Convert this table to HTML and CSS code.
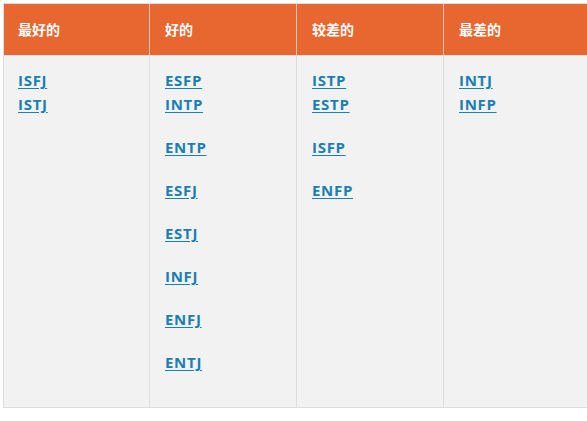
FILE: index.html
```html
<!DOCTYPE html>
<html lang="zh">
<head>
<meta charset="utf-8">
<link rel="stylesheet" href="styles.css">
</head>
<body>
<table class="types">
  <colgroup>
    <col class="c1">
    <col class="c">
    <col class="c">
    <col class="c">
  </colgroup>
  <thead>
    <tr>
      <th>最好的</th>
      <th>好的</th>
      <th>较差的</th>
      <th>最差的</th>
    </tr>
  </thead>
  <tbody>
    <tr>
      <td>
        <p><a href="#">ISFJ</a><br><a href="#">ISTJ</a></p>
      </td>
      <td>
        <p><a href="#">ESFP</a><br><a href="#">INTP</a></p>
        <p><a href="#">ENTP</a></p>
        <p><a href="#">ESFJ</a></p>
        <p><a href="#">ESTJ</a></p>
        <p><a href="#">INFJ</a></p>
        <p><a href="#">ENFJ</a></p>
        <p><a href="#">ENTJ</a></p>
      </td>
      <td>
        <p><a href="#">ISTP</a><br><a href="#">ESTP</a></p>
        <p><a href="#">ISFP</a></p>
        <p><a href="#">ENFP</a></p>
      </td>
      <td>
        <p><a href="#">INTJ</a><br><a href="#">INFP</a></p>
      </td>
    </tr>
  </tbody>
</table>
</body>
</html>
```

FILE: styles.css
```css
html, body {
  margin: 0;
  padding: 0;
  background: #ffffff;
  overflow: hidden;
}
body {
  padding: 3px 0 0 3px;
  font-family: "Open Sans", "Noto Sans CJK SC", sans-serif;
  font-size: 14px;
}
.types {
  border-collapse: collapse;
  table-layout: fixed;
  width: 588px;
  border: 1px solid #dddddd;
}
.types .c1 {
  width: 146px;
}
.types .c {
  width: 147px;
}
.types th {
  height: 52px;
  padding: 0 15px 2px 15px;
  box-sizing: border-box;
  background: #e8662f;
  color: #ffffff;
  text-align: left;
  font-weight: 700;
  font-size: 14px;
  border-left: 1px solid #f3c7b3;
  border-bottom: 1px solid #dddddd;
  vertical-align: middle;
}
.types th:first-child {
  border-left: none;
  padding-left: 14px;
}
.types td {
  background: #f2f2f2;
  vertical-align: top;
  padding: 12px 15px 0 15px;
  border-left: 1px solid #dddddd;
}
.types td:first-child {
  border-left: none;
  padding-left: 14px;
}
.types p {
  margin: 0 0 19px 0;
  font-size: 15px;
  line-height: 24px;
}
.types td p:last-child {
  margin-bottom: 33px;
}
.types a {
  color: #1a7fb2;
  font-weight: 700;
  text-decoration: underline;
  text-underline-offset: 2px;
  letter-spacing: 0.7px;
}
```
